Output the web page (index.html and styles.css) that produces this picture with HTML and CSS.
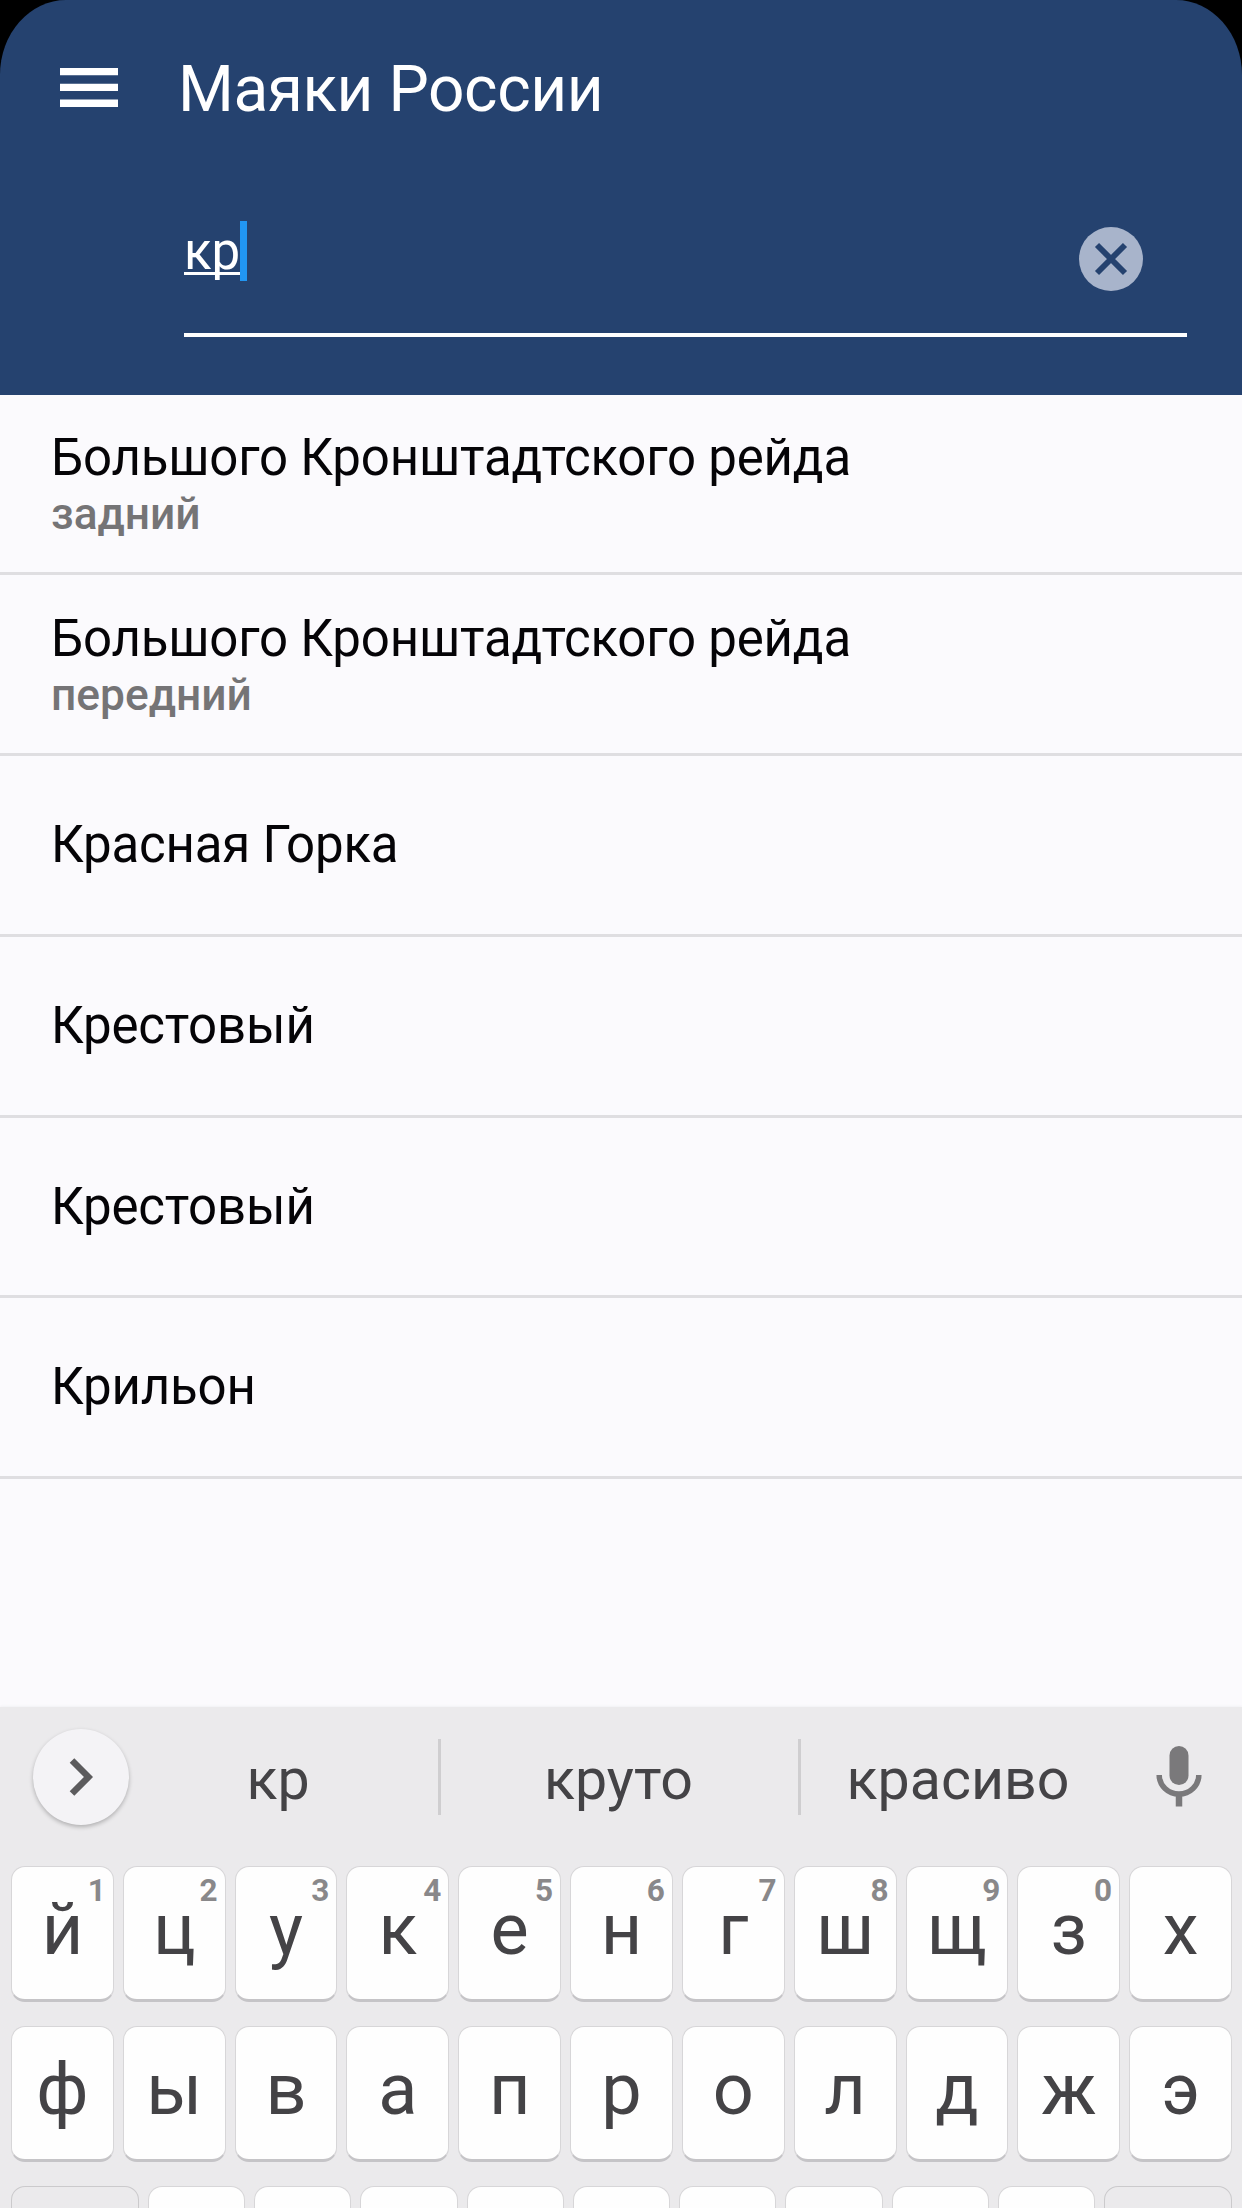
FILE: index.html
```html
<!DOCTYPE html>
<html lang="ru">
<head>
<meta charset="utf-8">
<title>Маяки России</title>
<link rel="stylesheet" href="styles.css">
</head>
<body>
<div class="screen">
  <header class="header">
    <div class="toolbar">
      <svg class="menu-icon" width="58" height="39" viewBox="0 0 58 39"><path d="M0 0h58v7.3H0zM0 15.8h58v7.3H0zM0 31.6h58v7.3H0z" fill="#fff"/></svg>
      <h1 class="app-title">Маяки России</h1>
    </div>
    <div class="search">
      <div class="query"><span class="query-text">кр</span><span class="caret"></span></div>
      <svg class="clear-icon" width="64" height="64" viewBox="0 0 64 64"><circle cx="32" cy="32" r="32" fill="#a8b4cb"/><path d="M18 18l28 28M46 18l-28 28" stroke="#25426f" stroke-width="5.8"/></svg>
    </div>
  </header>
  <main class="list">
    <div class="row double"><div class="name">Большого Кронштадтского рейда</div><div class="note">задний</div></div>
    <div class="row double"><div class="name">Большого Кронштадтского рейда</div><div class="note">передний</div></div>
    <div class="row"><div class="name">Красная Горка</div></div>
    <div class="row"><div class="name">Крестовый</div></div>
    <div class="row"><div class="name">Крестовый</div></div>
    <div class="row"><div class="name">Крильон</div></div>
  </main>
  <section class="keyboard">
    <div class="suggestions">
      <div class="expand"><svg width="24" height="38" viewBox="0 0 24 38"><path d="M3 2.5L19.5 19 3 35.5" fill="none" stroke="#5c5b5d" stroke-width="6.5"/></svg></div>
      <div class="word first">кр</div>
      <div class="divider"></div>
      <div class="word">круто</div>
      <div class="divider"></div>
      <div class="word last">красиво</div>
      <svg class="mic" width="46" height="62" viewBox="0 0 46 62"><rect x="13.5" y="0" width="19" height="39" rx="9.5" fill="#7a797b"/><path d="M3.2 29a19.8 19 0 0 0 39.6 0" fill="none" stroke="#7a797b" stroke-width="5.5"/><path d="M23 49v11.500" stroke="#7a797b" stroke-width="6.5"/></svg>
    </div>
    <div class="keys">
      <div class="key"><sup class="digit">1</sup>й</div>
      <div class="key"><sup class="digit">2</sup>ц</div>
      <div class="key"><sup class="digit">3</sup>у</div>
      <div class="key"><sup class="digit">4</sup>к</div>
      <div class="key"><sup class="digit">5</sup>е</div>
      <div class="key"><sup class="digit">6</sup>н</div>
      <div class="key"><sup class="digit">7</sup>г</div>
      <div class="key"><sup class="digit">8</sup>ш</div>
      <div class="key"><sup class="digit">9</sup>щ</div>
      <div class="key"><sup class="digit">0</sup>з</div>
      <div class="key">х</div>
    </div>
    <div class="keys">
      <div class="key">ф</div>
      <div class="key">ы</div>
      <div class="key">в</div>
      <div class="key">а</div>
      <div class="key">п</div>
      <div class="key">р</div>
      <div class="key">о</div>
      <div class="key">л</div>
      <div class="key">д</div>
      <div class="key">ж</div>
      <div class="key">э</div>
    </div>
    <div class="keys">
      <div class="key wide"></div>
      <div class="key"></div>
      <div class="key"></div>
      <div class="key"></div>
      <div class="key"></div>
      <div class="key"></div>
      <div class="key"></div>
      <div class="key"></div>
      <div class="key"></div>
      <div class="key"></div>
      <div class="key wide"></div>
    </div>
  </section>
</div>
</body>
</html>
```
FILE: styles.css
```css
* { box-sizing: border-box; }

body {
  margin: 0;
  background: #000;
  font-family: Roboto, "Noto Sans", sans-serif;
}

/* Black shows only behind the header's rounded corners */
.screen {
  width: 1242px;
  height: 2208px;
  overflow: hidden;
  display: flex;
  flex-direction: column;
  background: linear-gradient(#000 0 200px, #fbfafd 200px);
}

.header {
  height: 394.5px;
  flex: none;
  background: #25426f;
  border-radius: 66px 66px 0 0 / 75px 75px 0 0;
}

.toolbar {
  height: 180px;
  display: flex;
  align-items: center;
  padding-left: 60px;
  gap: 60px;
}

.menu-icon { margin-bottom: 5px; }

.app-title {
  margin: 0;
  color: #fff;
  font-size: 64px;
  font-weight: 400;
  letter-spacing: -.45px;
  line-height: 76px;
}

.search {
  margin: 0 55px 0 184px;
  height: 156.5px;
  border-bottom: 4px solid #fff;
  padding: 41px 44px 0 0;
  display: flex;
  justify-content: space-between;
  align-items: flex-start;
}

.query {
  display: flex;
  align-items: flex-start;
  color: #fff;
  font-size: 51px;
  line-height: 61px;
}

.query-text {
  text-decoration: underline;
  text-decoration-thickness: 3px;
  text-underline-offset: 3px;
  text-decoration-skip-ink: none;
}

.caret { width: 7px; height: 60px; background: #2196f3; }

.clear-icon { margin-top: 6px; }

.list { flex: none; height: 1312.5px; }

.row {
  height: 180.8px;
  padding-left: 51px;
  border-bottom: 3px solid #dfdee1;
  display: flex;
  flex-direction: column;
  justify-content: center;
}

.row.double { padding-top: 2px; }

.name {
  color: #050407;
  font-size: 51px;
  letter-spacing: -.19px;
  line-height: 60px;
}

.note { color: #757476; font-size: 44.3px; font-weight: 500; line-height: 53px; }

.keyboard {
  flex: none;
  height: 501px;
  background: #ebeaec;
  box-shadow: 0 0 3px #ebeaec;
}

.suggestions {
  height: 159px;
  padding: 0 40px 19px 33px;
  display: flex;
  align-items: center;
}

.expand {
  width: 96px;
  height: 96px;
  border-radius: 50%;
  background: #f4f3f6;
  box-shadow: 0 2px 4px rgba(0, 0, 0, .25);
  display: flex;
  align-items: center;
  justify-content: center;
}

.word {
  width: 357px;
  padding: 5px 2px 0 0;
  color: #444346;
  font-size: 57.3px;
  line-height: 66px;
  text-align: center;
}

.word.first { width: 309px; padding-right: 11px; }

.word.last { width: 316px; }

.divider { width: 3px; height: 76px; background: #cfced0; }

.mic { margin-left: auto; }

.keys {
  height: 136px;
  margin-bottom: 24px;
  padding: 0 10px 0 11px;
  display: flex;
  gap: 9px;
}

.key {
  position: relative;
  flex: 1 1 0;
  min-width: 0;
  border: 1px solid #d7d6d8;
  border-bottom: 3px solid #c5c4c7;
  border-radius: 14px;
  background: #fefefe;
  color: #444346;
  font-size: 72px;
  line-height: 126px;
  text-align: center;
}

.key.wide {
  flex: 0 0 128px;
  background: #ebeaec;
  border-color: #cbcacc;
}

/* Alternate character shown in the key's corner */
.digit {
  position: absolute;
  top: 5px;
  right: 7px;
  color: #89888a;
  font-size: 31.5px;
  font-weight: 700;
  line-height: 38px;
}
```
